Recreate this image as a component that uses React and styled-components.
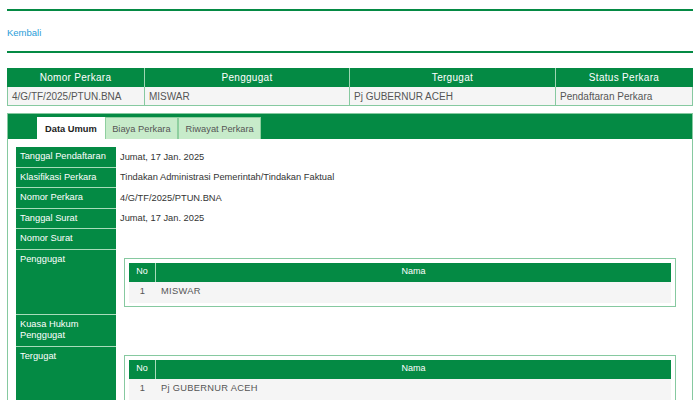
import React from 'react'
import styled, { createGlobalStyle } from 'styled-components'

const GREEN = '#048a44'
const LINE = '#86c9a0'

const Global = createGlobalStyle`
  body {
    margin: 0;
    background: #fff;
    font-family: "Liberation Sans", Arial, sans-serif;
  }
`

const Page = styled.div`
  padding: 9px 7px 0;
`

const Rule = styled.div`
  height: 2px;
  background: ${GREEN};
`

const BackBar = styled.div`
  height: 40px;
  display: flex;
  align-items: center;
  padding-top: 2px;
  box-sizing: border-box;
`

const BackLink = styled.a`
  color: #2a9dd8;
  font-size: 9.5px;
  text-decoration: none;
`

const Summary = styled.div`
  margin-top: 15px;
  display: grid;
  grid-template-columns: 138px 205px 206px 1fr;
`

const HeadCell = styled.div`
  background: ${GREEN};
  color: #fff;
  height: 19px;
  display: flex;
  align-items: center;
  justify-content: center;
  font-size: 10px;
  letter-spacing: 0.3px;
  border-right: 1px solid ${({ last }) => (last ? GREEN : '#9fd6b3')};
`

const DataCell = styled.div`
  background: #f5f5f5;
  color: #555;
  height: 19px;
  box-sizing: border-box;
  display: flex;
  align-items: center;
  padding-left: 4px;
  font-size: 10px;
  border-bottom: 1px solid ${LINE};
  border-right: 1px solid ${LINE};
  border-left: ${({ first }) => (first ? `1px solid ${LINE}` : 'none')};
`

const Panel = styled.div`
  margin-top: 7px;
  border: 1px solid ${LINE};
  border-bottom: none;
`

const TabBar = styled.div`
  background: ${GREEN};
  height: 25px;
  display: flex;
  align-items: flex-end;
  padding-left: 29px;
`

const Tab = styled.div`
  height: 22px;
  box-sizing: border-box;
  display: flex;
  align-items: center;
  padding: 0 ${({ active }) => (active ? '7px' : '6.5px')};
  font-size: 9.3px;
  background: ${({ active }) => (active ? '#fff' : '#c7ebca')};
  color: ${({ active }) => (active ? '#222' : '#555')};
  font-weight: ${({ active }) => (active ? 'bold' : 'normal')};
  border: 1px solid ${({ active }) => (active ? '#fff' : '#8fcf9f')};
  border-bottom: none;
`

const Body = styled.div`
  padding: 8px 8px 0;
`

const Row = styled.div`
  display: grid;
  grid-template-columns: 100px 1fr;
`

const Label = styled.div`
  background: ${GREEN};
  color: #fff;
  font-size: 9.3px;
  line-height: 11.5px;
  padding: 4px 4px;
  border-bottom: 1px solid #a9dcbb;
  box-sizing: border-box;
`

const Value = styled.div`
  font-size: 9.3px;
  line-height: 11.5px;
  color: #333;
  padding: ${({ boxed }) => (boxed ? '8px' : '4px 4px')};
  display: flex;
  align-items: ${({ boxed }) => (boxed ? 'flex-start' : 'center')};
`

const InnerBox = styled.div`
  flex: 1;
  border: 1px solid ${LINE};
  padding: 4px 4px 3px;
`

const InnerGrid = styled.div`
  display: grid;
  grid-template-columns: 27px 1fr;
`

const InnerHead = styled.div`
  background: ${GREEN};
  color: #fff;
  height: 19px;
  display: flex;
  align-items: center;
  justify-content: center;
  border-right: ${({ sep }) => (sep ? '1px solid #a9dcbb' : 'none')};
  font-size: 9px;
`

const InnerCell = styled.div`
  background: #f5f5f5;
  color: #555;
  height: 21px;
  display: flex;
  align-items: center;
  justify-content: ${({ center }) => (center ? 'center' : 'flex-start')};
  padding-left: ${({ center }) => (center ? '0' : '5px')};
  font-size: 9.3px;
  letter-spacing: 0.3px;
`

const PartyTable = ({ name }) => (
  <InnerBox>
    <InnerGrid>
      <InnerHead sep>No</InnerHead>
      <InnerHead>Nama</InnerHead>
      <InnerCell center>1</InnerCell>
      <InnerCell>{name}</InnerCell>
    </InnerGrid>
  </InnerBox>
)

const rows = [
  ['Tanggal Pendaftaran', 'Jumat, 17 Jan. 2025'],
  ['Klasifikasi Perkara', 'Tindakan Administrasi Pemerintah/Tindakan Faktual'],
  ['Nomor Perkara', '4/G/TF/2025/PTUN.BNA'],
  ['Tanggal Surat', 'Jumat, 17 Jan. 2025'],
  ['Nomor Surat', ''],
]

const App = () => {
  return (
    <>
      <Global />
      <Page>
        <Rule />
        <BackBar>
          <BackLink href="#">Kembali</BackLink>
        </BackBar>
        <Rule />
        <Summary>
          <HeadCell>Nomor Perkara</HeadCell>
          <HeadCell>Penggugat</HeadCell>
          <HeadCell>Tergugat</HeadCell>
          <HeadCell last>Status Perkara</HeadCell>
          <DataCell first>4/G/TF/2025/PTUN.BNA</DataCell>
          <DataCell>MISWAR</DataCell>
          <DataCell>Pj GUBERNUR ACEH</DataCell>
          <DataCell>Pendaftaran Perkara</DataCell>
        </Summary>
        <Panel>
          <TabBar>
            <Tab active>Data Umum</Tab>
            <Tab>Biaya Perkara</Tab>
            <Tab>Riwayat Perkara</Tab>
          </TabBar>
          <Body>
            {rows.map(([label, value]) => (
              <Row key={label}>
                <Label>{label}</Label>
                <Value>{value}</Value>
              </Row>
            ))}
            <Row>
              <Label>Penggugat</Label>
              <Value boxed>
                <PartyTable name="MISWAR" />
              </Value>
            </Row>
            <Row>
              <Label>Kuasa Hukum<br />Penggugat</Label>
              <Value />
            </Row>
            <Row>
              <Label>Tergugat</Label>
              <Value boxed>
                <PartyTable name="Pj GUBERNUR ACEH" />
              </Value>
            </Row>
          </Body>
        </Panel>
      </Page>
    </>
  )
}

export default App
